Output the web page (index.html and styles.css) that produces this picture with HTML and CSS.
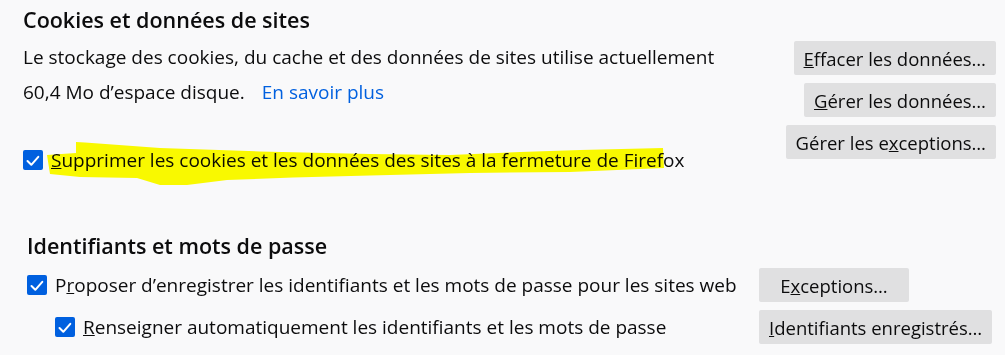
FILE: index.html
```html
<!DOCTYPE html>
<html lang="fr">
<head>
<meta charset="utf-8">
<title>Préférences</title>
<link rel="stylesheet" href="styles.css">
</head>
<body>
<div class="page">
  <section class="sec sec-cookies">
    <h2 class="sec-title">Cookies et données de sites</h2>
    <div class="sec-body">
      <div class="sec-main">
        <p class="desc">Le stockage des cookies, du cache et des données de sites utilise actuellement<br>60,4 Mo d’espace disque.<a class="link" href="#">En savoir plus</a></p>
        <label class="check-row row-delete">
          <span class="checkbox"><svg viewBox="0 0 20 20" width="20" height="20"><rect x="0" y="0" width="20" height="20" rx="2" fill="#0060df"/><path d="M4.5 11 L8.3 14.8 L15.3 6.8" fill="none" stroke="#fff" stroke-width="2" stroke-linecap="round" stroke-linejoin="round"/></svg></span>
          <span class="check-label"><u>S</u>upprimer les cookies et les données des sites à la fermeture de Firefox</span>
        </label>
      </div>
      <div class="btn-col">
        <button class="btn"><u>E</u>ffacer les données…</button>
        <button class="btn"><u>G</u>érer les données…</button>
        <button class="btn">Gérer les e<u>x</u>ceptions…</button>
      </div>
    </div>
  </section>

  <section class="sec sec-logins">
    <h2 class="sec-title">Identifiants et mots de passe</h2>
    <div class="logins-grid">
      <label class="check-row">
        <span class="checkbox"><svg viewBox="0 0 20 20" width="20" height="20"><rect x="0" y="0" width="20" height="20" rx="2" fill="#0060df"/><path d="M4.5 11 L8.3 14.8 L15.3 6.8" fill="none" stroke="#fff" stroke-width="2" stroke-linecap="round" stroke-linejoin="round"/></svg></span>
        <span class="check-label">P<u>r</u>oposer d’enregistrer les identifiants et les mots de passe pour les sites web</span>
      </label>
      <button class="btn btn-wide">E<u>x</u>ceptions…</button>
      <label class="check-row indent">
        <span class="checkbox"><svg viewBox="0 0 20 20" width="20" height="20"><rect x="0" y="0" width="20" height="20" rx="2" fill="#0060df"/><path d="M4.5 11 L8.3 14.8 L15.3 6.8" fill="none" stroke="#fff" stroke-width="2" stroke-linecap="round" stroke-linejoin="round"/></svg></span>
        <span class="check-label"><u>R</u>enseigner automatiquement les identifiants et les mots de passe</span>
      </label>
      <button class="btn"><u>I</u>dentifiants enregistrés…</button>
    </div>
  </section>

  <svg class="highlight" viewBox="0 0 1005 355" width="1005" height="355" aria-hidden="true">
    <path d="M76 142 L85 142.5 L160 148 L260 151.5 L370 154 L450 155 L520 152 L580 150 L663 148 L664 168 L570 172 L470 173 L370 175.5 L293 177.5 L227 180 L187 185 L160 185 L137 178 L80 177 L50 174 L47 155 L76 153 Z" fill="#ffff00"/>
  </svg>
</div>
</body>
</html>
```

FILE: styles.css
```css
html, body {
  margin: 0;
  background: #f9f9fa;
}

body {
  color: #0c0c0d;
  font-family: "Open Sans", "Noto Sans", sans-serif;
  font-size: 19px;
}

.page {
  position: relative;
  width: 1005px;
  height: 355px;
  box-sizing: border-box;
  padding: 5px 9px 0 23px;
  overflow: hidden;
}

.sec-title {
  margin: 0;
  font-size: 21.5px;
  font-weight: 600;
  line-height: 30px;
}

.sec-cookies .sec-body {
  display: flex;
  justify-content: space-between;
  align-items: flex-start;
  margin-top: 5px;
}

.desc {
  margin: 0;
  line-height: 35px;
  white-space: nowrap;
}

.link {
  color: #0060df;
  text-decoration: none;
  margin-left: 17px;
}

.check-row {
  display: flex;
  align-items: center;
  gap: 8px;
  height: 34px;
  white-space: nowrap;
  position: relative;
  z-index: 2;
}

.check-label {
  position: relative;
}

.checkbox {
  display: flex;
  width: 20px;
  height: 20px;
  flex: none;
}

.row-delete {
  margin-top: 33px;
}

.btn-col {
  display: flex;
  flex-direction: column;
  align-items: flex-end;
  gap: 8px;
  padding-top: 1px;
}

.btn {
  height: 34px;
  min-width: 150px;
  padding: 0 10px;
  background: #e0e0e1;
  border: 0;
  border-radius: 2px;
  color: #0c0c0d;
  font-family: inherit;
  font-size: 18.5px;
  white-space: nowrap;
}

.sec-logins {
  margin-top: 54px;
  margin-left: 4px;
}

.logins-grid {
  display: grid;
  grid-template-columns: 732px auto;
  row-gap: 8px;
  margin-top: 7px;
  justify-items: start;
  align-items: center;
}

.indent {
  padding-left: 28px;
}

.highlight {
  position: absolute;
  left: 0;
  top: 0;
  pointer-events: none;
  mix-blend-mode: multiply;
  z-index: 3;
}
```
